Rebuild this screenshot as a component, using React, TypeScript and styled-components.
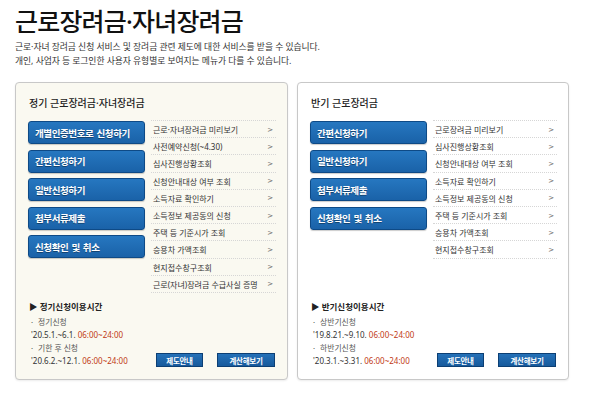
import styled, { createGlobalStyle } from "styled-components";

const GlobalStyle = createGlobalStyle`
  html, body {
    margin: 0;
    padding: 0;
    background: #ffffff;
  }
  body {
    font-family: "Noto Sans", "Noto Sans CJK KR", sans-serif;
    color: #333;
  }
`;

const Page = styled.div`
  width: 590px;
  height: 396px;
  padding: 5px 21px 0 15px;
  box-sizing: border-box;
`;

const Title = styled.h1`
  margin: 0;
  font-size: 25px;
  line-height: 32px;
  font-weight: 500;
  letter-spacing: -0.8px;
  color: #111;
`;

const Lead = styled.p`
  margin: 3px 0 0;
  font-size: 8.8px;
  line-height: 14px;
  letter-spacing: -0.05px;
  color: #333;
`;

const Panels = styled.div`
  display: grid;
  grid-template-columns: 273px 272px;
  gap: 9px;
  margin-top: 14px;
`;

const Panel = styled.section<{ tone: "cream" | "white" }>`
  height: 298px;
  box-sizing: border-box;
  display: flex;
  flex-direction: column;
  padding: 11px 11px 11px 12px;
  border: 1px solid #c8c8c8;
  border-radius: 4px;
  background: ${(p) => (p.tone === "cream" ? "#faf9f1" : "#ffffff")};
  box-shadow: 0 1px 2px rgba(0, 0, 0, 0.08);
`;

const PanelTitle = styled.h2`
  margin: 0 0 0 1px;
  font-size: 10px;
  line-height: 18px;
  font-weight: 500;
  color: #222;
`;

const Body = styled.div`
  display: flex;
  gap: 6px;
  margin-top: 8px;
`;

const ButtonColumn = styled.div`
  display: flex;
  flex-direction: column;
  gap: 5.5px;
  width: 117px;
  flex-shrink: 0;
  padding-top: 1px;
`;

const BigButton = styled.button`
  height: 23px;
  box-sizing: border-box;
  display: flex;
  align-items: center;
  padding: 0 0 0 6px;
  border: 1px solid #0e4a86;
  border-radius: 3px;
  background: linear-gradient(#2677c0, #1a62a8);
  color: #fff;
  font-family: inherit;
  font-size: 9.5px;
  font-weight: 700;
  letter-spacing: -0.4px;
  word-spacing: 1px;
  text-shadow: 0 1px 0 rgba(0, 0, 0, 0.35);
  box-shadow: 0 1px 1px rgba(0, 0, 0, 0.2);
`;

const MenuList = styled.ul`
  list-style: none;
  margin: 0;
  padding: 0;
  flex: 1;
  border-top: 1px dotted #d6d6d6;
`;

const MenuItem = styled.li`
  height: 17.2px;
  box-sizing: border-box;
  display: flex;
  align-items: center;
  justify-content: space-between;
  padding: 1px 3px 0 2px;
  border-bottom: 1px dotted #d6d6d6;
  font-size: 8px;
  color: #333;
  white-space: nowrap;
`;

const Chevron = styled.span`
  font-family: "DejaVu Sans", sans-serif;
  font-size: 7px;
  color: #666;
`;

const Footer = styled.div`
  margin-top: auto;
  display: flex;
  justify-content: space-between;
  align-items: flex-end;
`;

const Hours = styled.div`
  padding-left: 1px;
`;

const HoursTitle = styled.div`
  font-size: 8.5px;
  font-weight: 700;
  line-height: 14px;
  color: #222;
  margin-bottom: 2px;
`;

const Label = styled.div`
  font-size: 7.8px;
  line-height: 12px;
  color: #555;
  &::before {
    content: "·";
    margin: 0 5px 0 2px;
  }
`;

const Period = styled.div`
  font-size: 8px;
  line-height: 13px;
  color: #333;
  padding-left: 2px;
  margin-bottom: 1px;
  span {
    color: #bf3a16;
  }
`;

const SmallButtons = styled.div`
  display: flex;
  gap: 14px;
  padding-right: 1px;
  margin-bottom: 1px;
`;

const SmallButton = styled.button<{ w: number }>`
  width: ${(p) => p.w}px;
  height: 14px;
  padding: 0;
  border: 1px solid #0c3f74;
  background: linear-gradient(#2571b8, #175a9c);
  color: #fff;
  font-family: inherit;
  font-size: 7.5px;
  font-weight: 700;
  letter-spacing: -0.3px;
`;

type Period = { label: string; dates: string };

type PanelData = {
  tone: "cream" | "white";
  title: string;
  buttons: string[];
  menu: string[];
  hoursTitle: string;
  periods: Period[];
};

const panels: PanelData[] = [
  {
    tone: "cream",
    title: "정기 근로장려금·자녀장려금",
    buttons: [
      "개별인증번호로 신청하기",
      "간편신청하기",
      "일반신청하기",
      "첨부서류제출",
      "신청확인 및 취소",
    ],
    menu: [
      "근로·자녀장려금 미리보기",
      "사전예약신청(~4.30)",
      "심사진행상황조회",
      "신청안내대상 여부 조회",
      "소득자료 확인하기",
      "소득정보 제공동의 신청",
      "주택 등 기준시가 조회",
      "승용차 가액조회",
      "현지접수창구조회",
      "근로(자녀)장려금 수급사실 증명",
    ],
    hoursTitle: "정기신청이용시간",
    periods: [
      { label: "정기신청", dates: "'20.5.1.~6.1." },
      { label: "기한 후 신청", dates: "'20.6.2.~12.1." },
    ],
  },
  {
    tone: "white",
    title: "반기 근로장려금",
    buttons: ["간편신청하기", "일반신청하기", "첨부서류제출", "신청확인 및 취소"],
    menu: [
      "근로장려금 미리보기",
      "심사진행상황조회",
      "신청안내대상 여부 조회",
      "소득자료 확인하기",
      "소득정보 제공동의 신청",
      "주택 등 기준시가 조회",
      "승용차 가액조회",
      "현지접수창구조회",
    ],
    hoursTitle: "반기신청이용시간",
    periods: [
      { label: "상반기신청", dates: "'19.8.21.~9.10." },
      { label: "하반기신청", dates: "'20.3.1.~3.31." },
    ],
  },
];

function App() {
  return (
    <Page>
      <GlobalStyle />
      <Title>근로장려금·자녀장려금</Title>
      <Lead>
        근로·자녀 장려금 신청 서비스 및 장려금 관련 제도에 대한 서비스를 받을 수 있습니다.
        <br />
        개인, 사업자 등 로그인한 사용자 유형별로 보여지는 메뉴가 다를 수 있습니다.
      </Lead>
      <Panels>
        {panels.map((panel) => (
          <Panel key={panel.title} tone={panel.tone}>
            <PanelTitle>{panel.title}</PanelTitle>
            <Body>
              <ButtonColumn>
                {panel.buttons.map((b) => (
                  <BigButton key={b}>{b}</BigButton>
                ))}
              </ButtonColumn>
              <MenuList>
                {panel.menu.map((m) => (
                  <MenuItem key={m}>
                    {m}
                    <Chevron>&gt;</Chevron>
                  </MenuItem>
                ))}
              </MenuList>
            </Body>
            <Footer>
              <Hours>
                <HoursTitle>▶ {panel.hoursTitle}</HoursTitle>
                {panel.periods.map((p) => (
                  <div key={p.label}>
                    <Label>{p.label}</Label>
                    <Period>
                      {p.dates} <span>06:00~24:00</span>
                    </Period>
                  </div>
                ))}
              </Hours>
              <SmallButtons>
                <SmallButton w={47}>제도안내</SmallButton>
                <SmallButton w={58}>계산해보기</SmallButton>
              </SmallButtons>
            </Footer>
          </Panel>
        ))}
      </Panels>
    </Page>
  );
}

export default App;
